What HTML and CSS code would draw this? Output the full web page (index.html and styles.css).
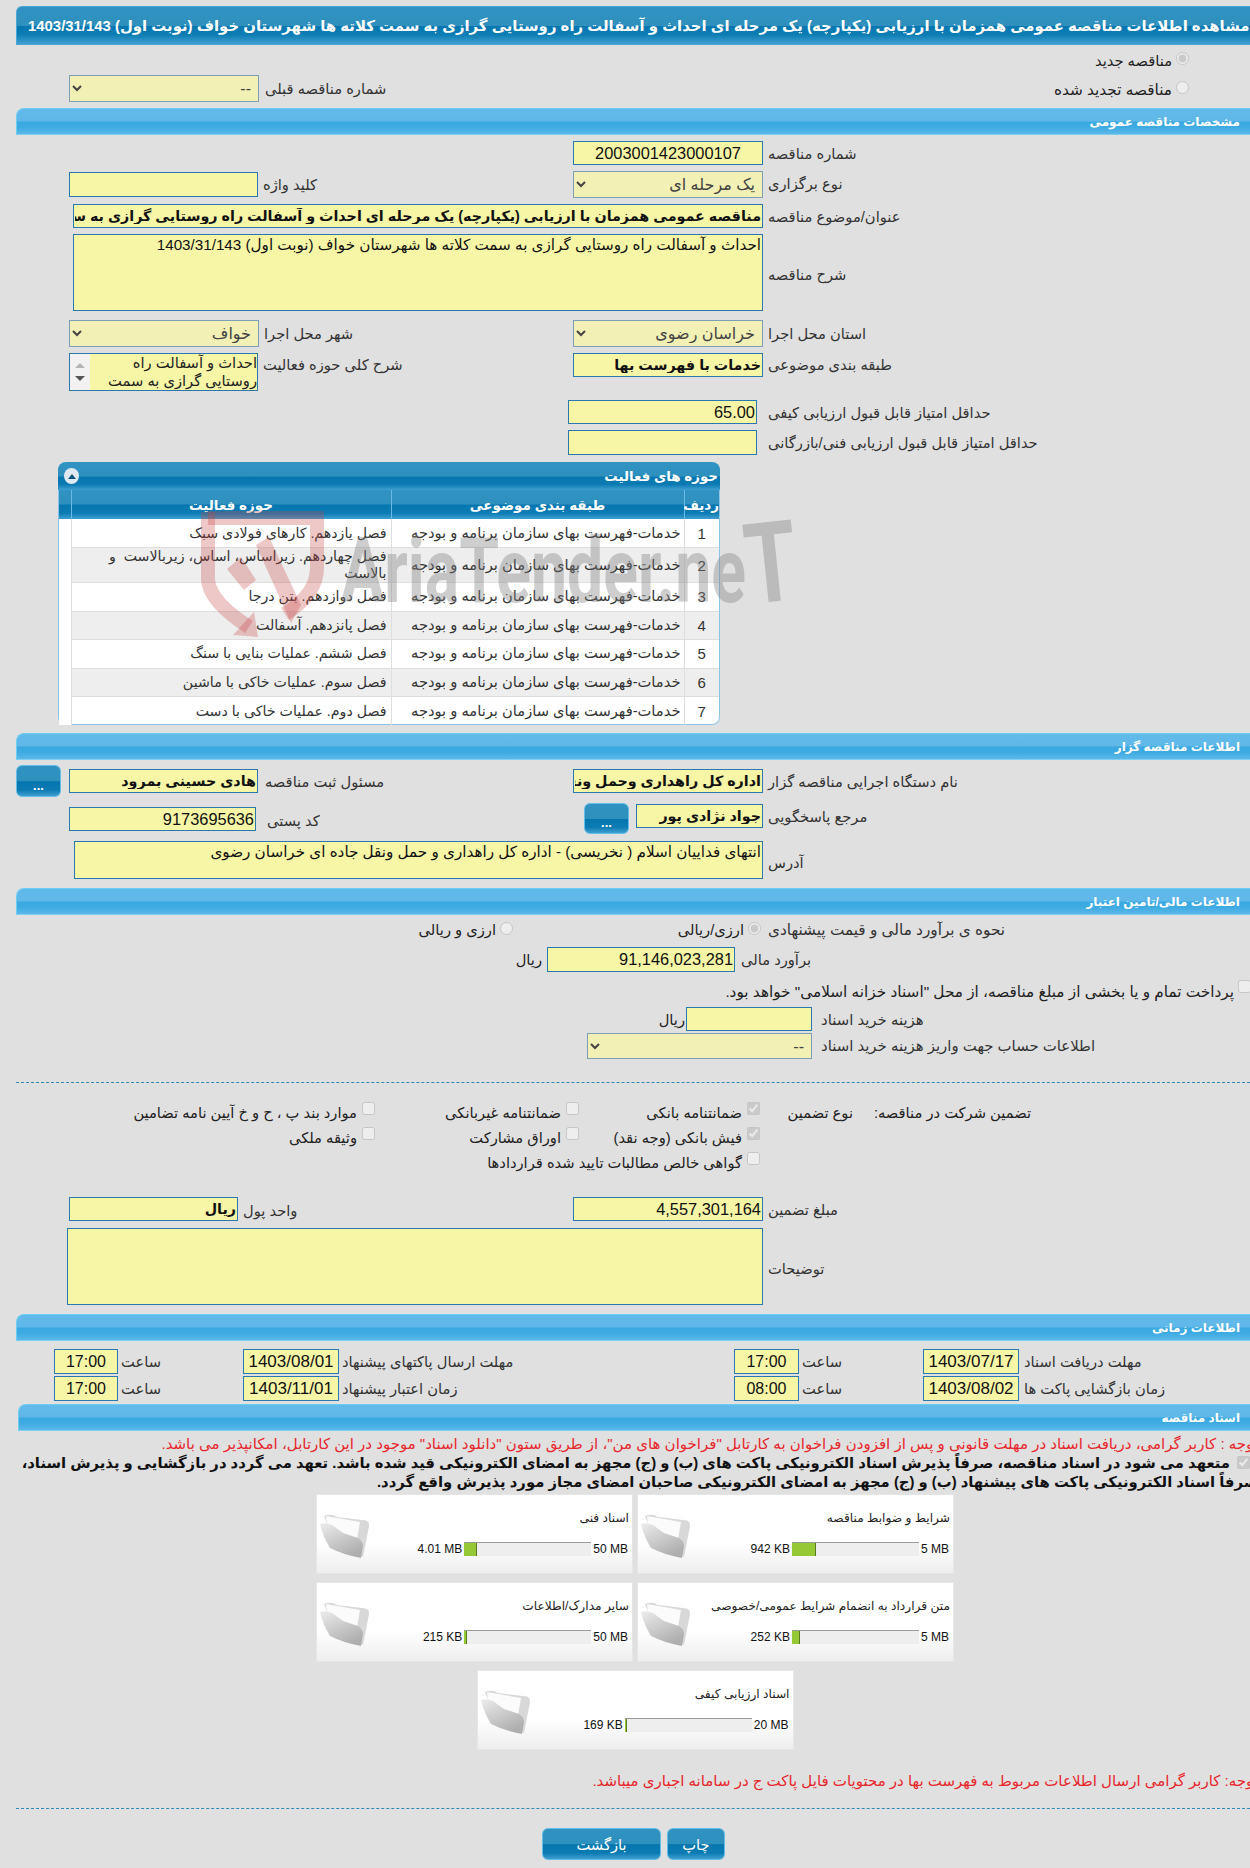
FILE: index.html
```html
<!DOCTYPE html>
<html lang="fa">
<head>
<meta charset="utf-8">
<title>مشاهده اطلاعات مناقصه</title>
<link rel="stylesheet" href="styles.css">
</head>
<body>
<svg class="defs" width="0" height="0" aria-hidden="true">
  <defs>
    <linearGradient id="fold" x1="0" y1="0" x2="0.6" y2="1"><stop offset="0" stop-color="#ececec"/><stop offset="1" stop-color="#aeaeae"/></linearGradient>
    <symbol id="folder" viewBox="0 0 52 45">
      <path d="M4 3 Q11 0 17 4 L42 7 Q50 7 49 13 L43 44 L14 28Z" fill="#d8d8d8"/>
      <path d="M6 3 L40 9 L36 32 L8 20Z" fill="#fbfbfb"/>
      <path d="M0 11 Q5 9 12 12 L23 20 L38 25 Q43 28 43 33 L41 45 Q24 42 10 35 Q3 24 0 11Z" fill="url(#fold)"/>
    </symbol>
  </defs>
</svg>
<main class="page">
  <h1 class="title"><span>مشاهده اطلاعات مناقصه عمومی همزمان با ارزیابی (یکپارچه) یک مرحله ای احداث و آسفالت راه روستایی گرازی به سمت کلاته ها شهرستان خواف (نوبت اول) 1403/31/143</span></h1>

  <div class="row radio-row-a">
    <div></div>
    <label class="opt opt-top"><input type="radio" checked disabled><span>مناقصه جدید</span></label>
  </div>
  <div class="row radio-row-b">
    <div class="col-l f"><select class="sel w190" disabled dir="rtl"><option>--</option></select><span class="lbl lbl-mid">شماره مناقصه قبلی</span></div>
    <label class="opt opt-top"><input type="radio" disabled><span>مناقصه تجدید شده</span></label>
  </div>

  <h2 class="section">مشخصات مناقصه عمومی</h2>
  <div class="row mt6">
    <div></div>
    <div class="f"><input class="inp w190 h24 num num-l" dir="ltr" value="2003001423000107" readonly><span class="lbl">شماره مناقصه</span></div>
  </div>
  <div class="row mt6">
    <div class="col-l f off1"><input class="inp w189 h25" readonly><span class="lbl">کلید واژه</span></div>
    <div class="f"><select class="sel w190" disabled dir="rtl"><option>یک مرحله ای</option></select><span class="lbl">نوع برگزاری</span></div>
  </div>
  <div class="full mt6 off-wide f">
    <input class="inp w690 h24 strong" dir="rtl" value="مناقصه عمومی همزمان با ارزیابی (یکپارچه) یک مرحله ای احداث و آسفالت راه روستایی گرازی به سمت کلاته ها شهرستان خواف (نوبت اول) 1403/31/143" readonly>
    <span class="lbl">عنوان/موضوع مناقصه</span>
  </div>
  <div class="full mt6 off-wide f">
    <textarea class="inp w690 h77" dir="rtl" readonly>احداث و آسفالت راه روستایی گرازی به سمت کلاته ها شهرستان خواف (نوبت اول) 1403/31/143</textarea>
    <span class="lbl lbl-center">شرح مناقصه</span>
  </div>
  <div class="row mt9">
    <div class="col-l f"><select class="sel w190" disabled dir="rtl"><option>خواف</option></select><span class="lbl lbl-s">شهر محل اجرا</span></div>
    <div class="f"><select class="sel w190" disabled dir="rtl"><option>خراسان رضوی</option></select><span class="lbl lbl-s">استان محل اجرا</span></div>
  </div>
  <div class="row mt6">
    <div class="col-l f">
      <div class="scrollbox">
        <div class="scrollbar"><i class="up"></i><i class="down"></i></div>
        <div class="scrolltext" dir="rtl">احداث و آسفالت راه<br>روستایی گرازی به سمت</div>
      </div>
      <span class="lbl lbl-top">شرح کلی حوزه فعالیت</span>
    </div>
    <div class="f"><input class="inp w190 h24 strong" dir="rtl" value="خدمات با فهرست بها" readonly><span class="lbl lbl-top">طبقه بندی موضوعی</span></div>
  </div>
  <div class="full mt9 off-score f"><input class="inp w189 h24 num" dir="rtl" value="65.00" readonly><span class="lbl lbl-score">حداقل امتیاز قابل قبول ارزیابی کیفی</span></div>
  <div class="full mt6 off-score f"><input class="inp w189 h25" readonly><span class="lbl lbl-score">حداقل امتیاز قابل قبول ارزیابی فنی/بازرگانی</span></div>

  <section class="panel">
    <div class="panel-head"><button class="collapse" aria-label="بستن"><i></i></button><span>حوزه های فعالیت</span></div>
    <table class="grid">
      <colgroup><col class="c0"><col class="c1"><col class="c2"><col class="c3"></colgroup>
      <thead><tr><th></th><th>حوزه فعالیت</th><th>طبقه بندی موضوعی</th><th>ردیف</th></tr></thead>
      <tbody>
        <tr><td></td><td>فصل یازدهم. کارهای فولادی سبک</td><td>خدمات-فهرست بهای سازمان برنامه و بودجه</td><td>1</td></tr>
        <tr><td></td><td>فصل چهاردهم. زیراساس، اساس، زیربالاست &nbsp;و بالاست</td><td>خدمات-فهرست بهای سازمان برنامه و بودجه</td><td>2</td></tr>
        <tr><td></td><td>فصل دوازدهم. بتن درجا</td><td>خدمات-فهرست بهای سازمان برنامه و بودجه</td><td>3</td></tr>
        <tr><td></td><td>فصل پانزدهم. آسفالت</td><td>خدمات-فهرست بهای سازمان برنامه و بودجه</td><td>4</td></tr>
        <tr><td></td><td>فصل ششم. عملیات بنایی با سنگ</td><td>خدمات-فهرست بهای سازمان برنامه و بودجه</td><td>5</td></tr>
        <tr><td></td><td>فصل سوم. عملیات خاکی با ماشین</td><td>خدمات-فهرست بهای سازمان برنامه و بودجه</td><td>6</td></tr>
        <tr><td></td><td>فصل دوم. عملیات خاکی با دست</td><td>خدمات-فهرست بهای سازمان برنامه و بودجه</td><td>7</td></tr>
      </tbody>
    </table>
    <svg class="watermark" viewBox="0 0 760 263" width="760" height="263" aria-hidden="true">
      <g fill="none" stroke="#c84646" stroke-opacity=".3" stroke-width="14">
        <path d="M149 56 H258 V106 Q258 132 226 152"/>
        <path d="M149 50 V118 Q151 140 190 165"/>
      </g>
      <g fill="#c84646" fill-opacity=".3">
        <path d="M174 173 L199 175 L195 150Z"/>
        <path d="M197 83 L210 75 L242 143 L232 161Z"/>
        <path d="M168 107 L182 95 L197 118 L185 128Z"/>
      </g>
      <text class="wm-text" x="282" y="140" textLength="405" lengthAdjust="spacingAndGlyphs">AriaTender.ne</text>
      <text class="wm-text wm-t" x="690" y="142" transform="rotate(-6 690 142)" textLength="52" lengthAdjust="spacingAndGlyphs">T</text>
    </svg>
  </section>

  <h2 class="section mt8">اطلاعات مناقصه گزار</h2>
  <div class="row mt9">
    <div class="f"><button class="btn btn-dots">...</button><input class="inp w189 h24 strong ml8" dir="rtl" value="هادی حسینی بمرود" readonly><span class="lbl lbl-far">مسئول ثبت مناقصه</span></div>
    <div class="f"><input class="inp w190 h24 strong" dir="rtl" value="اداره کل راهداری وحمل ونقل جاده ای خراسان رضوی" readonly><span class="lbl">نام دستگاه اجرایی مناقصه گزار</span></div>
  </div>
  <div class="row mt7">
    <div class="col-l f"><input class="inp w187 h24 mt3 num" dir="rtl" value="9173695636" readonly><span class="lbl lbl-post">کد پستی</span></div>
    <div class="f resp"><button class="btn btn-dots btn-resp">...</button><input class="inp w127 h24 strong" dir="rtl" value="جواد نژادی پور" readonly><span class="lbl">مرجع پاسخگویی</span></div>
  </div>
  <div class="full mt7 off-addr f">
    <textarea class="inp w689 h38" dir="rtl" readonly>انتهای فداییان اسلام ( نخریسی) - اداره کل راهداری و حمل ونقل جاده ای خراسان رضوی</textarea>
    <span class="lbl lbl-center">آدرس</span>
  </div>

  <h2 class="section mt9">اطلاعات مالی/تامین اعتبار</h2>
  <div class="mode mt7">
    <label class="opt mode-a"><input type="radio" disabled><span>ارزی و ریالی</span></label>
    <label class="opt mode-b"><input type="radio" checked disabled><span>ارزی/ریالی</span></label>
    <span class="lbl">نحوه ی برآورد مالی و قیمت پیشنهادی</span>
  </div>
  <div class="est mt11">
    <span class="unit">ریال</span>
    <input class="inp w188 h25 num" dir="rtl" value="91,146,023,281" readonly>
    <span class="lbl lbl-est">برآورد مالی</span>
  </div>
  <label class="opt treasury"><input type="checkbox" disabled><span>پرداخت تمام و یا بخشی از مبلغ مناقصه، از محل "اسناد خزانه اسلامی" خواهد بود.</span></label>
  <div class="fee mt4">
    <span class="unit unit-tight">ریال</span>
    <input class="inp w126 h24" readonly>
    <span class="lbl lbl-fee">هزینه خرید اسناد</span>
  </div>
  <div class="account mt2">
    <select class="sel w225 h26" disabled dir="rtl"><option>--</option></select>
    <span class="lbl lbl-fee">اطلاعات حساب جهت واریز هزینه خرید اسناد</span>
  </div>
  <hr class="dash dash-a">

  <div class="guarantee">
    <label class="opt"><input type="checkbox" disabled><span>موارد بند پ ، ح و خ آیین نامه تضامین</span></label>
    <label class="opt"><input type="checkbox" disabled><span>ضمانتنامه غیربانکی</span></label>
    <label class="opt"><input type="checkbox" checked disabled><span>ضمانتنامه بانکی</span></label>
    <span class="g-type">نوع تضمین</span>
    <span class="g-head">تضمین شرکت در مناقصه:</span>
    <label class="opt"><input type="checkbox" disabled><span>وثیقه ملکی</span></label>
    <label class="opt"><input type="checkbox" disabled><span>اوراق مشارکت</span></label>
    <label class="opt"><input type="checkbox" checked disabled><span>فیش بانکی (وجه نقد)</span></label>
    <span></span><span></span>
    <span></span>
    <label class="opt g-wide"><input type="checkbox" disabled><span>گواهی خالص مطالبات تایید شده قراردادها</span></label>
  </div>

  <div class="row mt22">
    <div class="col-l f"><input class="inp w169 h24 strong" dir="rtl" value="ریال" readonly><span class="lbl lbl-s">واحد پول</span></div>
    <div class="f"><input class="inp w190 h24 num" dir="rtl" value="4,557,301,164" readonly><span class="lbl">مبلغ تضمین</span></div>
  </div>
  <div class="full mt6 off-note f">
    <textarea class="inp w696 h77" dir="rtl" readonly></textarea>
    <span class="lbl lbl-center">توضیحات</span>
  </div>

  <h2 class="section mt9">اطلاعات زمانی</h2>
  <div class="times mt8">
    <div class="f"><input class="inp w64 h25 num num-c" value="17:00" readonly><span class="lbl lbl-t">ساعت</span></div>
    <div class="f"><input class="inp w96 h25 num num-c" value="1403/08/01" readonly><span class="lbl lbl-t">مهلت ارسال پاکتهای پیشنهاد</span></div>
    <div class="f"><input class="inp w65 h25 num num-c" value="17:00" readonly><span class="lbl lbl-t">ساعت</span></div>
    <div class="f"><input class="inp w96 h25 num num-c" value="1403/07/17" readonly><span class="lbl lbl-d">مهلت دریافت اسناد</span></div>
  </div>
  <div class="times mt2">
    <div class="f"><input class="inp w64 h25 num num-c" value="17:00" readonly><span class="lbl lbl-t">ساعت</span></div>
    <div class="f"><input class="inp w96 h25 num num-c" value="1403/11/01" readonly><span class="lbl lbl-t">زمان اعتبار پیشنهاد</span></div>
    <div class="f"><input class="inp w65 h25 num num-c" value="08:00" readonly><span class="lbl lbl-t">ساعت</span></div>
    <div class="f"><input class="inp w96 h25 num num-c" value="1403/08/02" readonly><span class="lbl lbl-d">زمان بازگشایی پاکت ها</span></div>
  </div>

  <h2 class="section section-docs">اسناد مناقصه</h2>
  <p class="warn warn-a">توجه : کاربر گرامی، دریافت اسناد در مهلت قانونی و پس از افزودن فراخوان به کارتابل "فراخوان های من"، از طریق ستون "دانلود اسناد" موجود در این کارتابل، امکانپذیر می باشد.</p>
  <p class="pledge"><input type="checkbox" checked disabled>متعهد می شود در اسناد مناقصه، صرفاً پذیرش اسناد الکترونیکی پاکت های (ب) و (ج) مجهز به امضای الکترونیکی قید شده باشد. تعهد می گردد در بازگشایی و پذیرش اسناد،<br>صرفاً اسناد الکترونیکی پاکت های پیشنهاد (ب) و (ج) مجهز به امضای الکترونیکی صاحبان امضای مجاز مورد پذیرش واقع گردد.</p>

  <div class="cards">
    <article class="card">
      <svg class="folder"><use href="#folder"/></svg>
      <div class="card-body"><div class="card-title">شرایط و ضوابط مناقصه</div>
        <div class="usage"><span class="used">942 KB</span><span class="bar"><i style="width:19%"></i></span><span class="max">5 MB</span></div></div>
    </article>
    <article class="card">
      <svg class="folder"><use href="#folder"/></svg>
      <div class="card-body"><div class="card-title">اسناد فنی</div>
        <div class="usage"><span class="used">4.01 MB</span><span class="bar"><i style="width:10%"></i></span><span class="max">50 MB</span></div></div>
    </article>
    <article class="card">
      <svg class="folder"><use href="#folder"/></svg>
      <div class="card-body"><div class="card-title">متن قرارداد به انضمام شرایط عمومی/خصوصی</div>
        <div class="usage"><span class="used">252 KB</span><span class="bar"><i style="width:6%"></i></span><span class="max">5 MB</span></div></div>
    </article>
    <article class="card">
      <svg class="folder"><use href="#folder"/></svg>
      <div class="card-body"><div class="card-title">سایر مدارک/اطلاعات</div>
        <div class="usage"><span class="used">215 KB</span><span class="bar"><i style="width:2%"></i></span><span class="max">50 MB</span></div></div>
    </article>
    <article class="card">
      <svg class="folder"><use href="#folder"/></svg>
      <div class="card-body"><div class="card-title">اسناد ارزیابی کیفی</div>
        <div class="usage"><span class="used">169 KB</span><span class="bar"><i style="width:2%"></i></span><span class="max">20 MB</span></div></div>
    </article>
  </div>

  <p class="warn warn-b">توجه: کاربر گرامی ارسال اطلاعات مربوط به فهرست بها در محتویات فایل پاکت ج در سامانه اجباری میباشد.</p>
  <hr class="dash dash-b">
  <div class="actions">
    <button class="btn btn-back">بازگشت</button>
    <button class="btn btn-print">چاپ</button>
  </div>
</main>
</body>
</html>
```

FILE: styles.css
```css
* { box-sizing: border-box; }
html, body { margin: 0; padding: 0; overflow: hidden; }
html { background: #e0e0e0; }
body {
  width: 1250px;
  height: 1868px;
  font-family: "Liberation Sans", "DejaVu Sans", sans-serif;
  font-size: 14.7px;
  color: #222;
}
.defs { position: absolute; }
.page { padding: 6px 0 0 16px; width: 1250px; }

/* headers */
.title {
  margin: 0;
  height: 39px;
  display: flex;
  align-items: center;
  padding-left: 11px;
  overflow: hidden;
  white-space: nowrap;
  color: #fff;
  font-size: 14.9px;
  font-weight: bold;
  border: 1px solid #4aa6d8;
  border-right: 0;
  border-radius: 6px 0 0 0;
  background: linear-gradient(#2f93c1 0, #2f90bd 50%, #0676b0 52%, #0d7db4 75%, #3f9fd0 100%);
}
.title span { direction: rtl; flex: none; }
.section {
  margin: 0;
  height: 27px;
  line-height: 26px;
  padding-right: 10px;
  text-align: right;
  direction: rtl;
  color: #fff;
  font-size: 12px;
  font-weight: bold;
  border: 1px solid #6ccdf2;
  border-right: 0;
  border-bottom-color: #7dd0f2;
  border-radius: 8px 0 0 0;
  background: linear-gradient(#62baea 0, #60b8e8 48%, #3aa8e1 52%, #3fabe3 75%, #5cb8e8 100%);
}
.section.mt8 { margin-top: 8px; }
.section.mt9 { margin-top: 9px; }
.section-docs { margin: 3px 0 0 2px; }

/* rows */
.row { display: grid; grid-template-columns: 557px 677px; align-items: start; }
.radio-row-a { height: 28px; }
.radio-row-b { height: 35px; }
.radio-row-b .col-l { margin-top: 2px; }
.f { display: flex; align-items: flex-start; }
.col-l { padding-left: 53px; }
.off1 { padding-top: 1px; }
.off-wide { padding-left: 57px; }
.off-score { padding-left: 552px; }
.off-addr { padding-left: 58px; }
.off-note { padding-left: 51px; }
.ml8 { margin-left: 8px; }

.mt2 { margin-top: 2px; }
.mt3 { margin-top: 3px; }
.mt4 { margin-top: 4px; }
.mt6 { margin-top: 6px; }
.mt7 { margin-top: 7px; }
.mt8 { margin-top: 8px; }
.mt9 { margin-top: 9px; }
.mt11 { margin-top: 11px; }
.mt22 { margin-top: 22px; }

/* fields */
.inp {
  display: block;
  padding: 0 1px;
  border: 1px solid #2a78ae;
  border-radius: 0;
  background: #f7f6a6;
  color: #111;
  font-family: "Liberation Sans", "DejaVu Sans", sans-serif;
  font-size: 15.2px;
  outline: none;
  resize: none;
  overflow: hidden;
}
textarea.inp { line-height: 17px; padding-top: 1px; }
.inp.strong { font-size: 14.3px; font-weight: bold; }
.inp.num { font-size: 16.4px; }
.inp.num-l { text-align: center; }
.inp.num-c { text-align: center; font-size: 16px; padding: 0; }
.inp.num-c.w96 { font-size: 17px; }
.sel {
  display: block;
  height: 27px;
  padding: 0 3px;
  border: 1px solid #7d9fb5;
  border-radius: 0;
  background-color: #f2f0b4;
  color: #444;
  opacity: 1;
  font-family: "Liberation Sans", "DejaVu Sans", sans-serif;
  font-size: 16px;
}
.w64 { width: 64px; } .w65 { width: 65px; } .w96 { width: 96px; }
.w126 { width: 126px; } .w127 { width: 127px; } .w169 { width: 169px; }
.w187 { width: 187px; } .w188 { width: 188px; } .w189 { width: 189px; }
.w190 { width: 190px; } .w225 { width: 225px; } .w689 { width: 689px; }
.w690 { width: 690px; } .w696 { width: 696px; }
.h24 { height: 24px; } .h25 { height: 25px; } .h26 { height: 26px; }
.h38 { height: 38px; } .h77 { height: 77px; }

.lbl { direction: rtl; margin-left: 5px; height: 24px; line-height: 26px; color: #333; white-space: nowrap; }
.lbl-s { margin-top: 1px; }
.lbl-mid { margin-top: 1px; margin-left: 6px; }
.lbl-top { margin-top: -1px; }
.lbl-center { align-self: center; margin-top: 3px; }
.lbl-far { margin-left: 7px; }
.lbl-score { margin-left: 11px; }
.lbl-post { margin-top: 4px; margin-left: 11px; }
.lbl-t { margin-left: 3px; }
.lbl-d { margin-left: 5px; }
.lbl-est { margin-left: 6px; }
.lbl-fee { margin-left: 9px; font-size: 14.9px; }

/* times */
.times { display: grid; grid-template-columns: 189px 491px 189px 1fr; padding-left: 38px; }

/* scroll list */
.scrollbox { display: flex; width: 189px; height: 38px; border: 1px solid #2a78ae; background: #f7f6a6; overflow: hidden; }
.scrollbar { flex: none; width: 20px; background: #f2f2f2; display: flex; flex-direction: column; align-items: center; justify-content: center; gap: 8px; }
.scrollbar i { width: 0; height: 0; border-left: 5px solid transparent; border-right: 5px solid transparent; }
.up { border-bottom: 5px solid #b5b5b5; }
.down { border-top: 5px solid #555; }
.scrolltext { flex: 1; line-height: 18px; white-space: nowrap; text-align: right; color: #222; overflow: hidden; }

/* options */
.opt { display: flex; justify-content: flex-end; align-items: flex-start; gap: 4px; direction: ltr; }
.opt span { direction: rtl; white-space: nowrap; }
.opt input { margin: 0; order: 2; width: 13px; height: 13px; flex: none; }
.opt-top { padding-right: 61px; line-height: 24px; }
.opt-top span { margin-top: 4px; }
.opt-top input { margin-top: 7px; }
.radio-row-b .opt-top span { margin-top: 5px; font-size: 15.3px; }
.radio-row-b .opt-top input { margin-top: 8px; }

.mode { display: flex; align-items: flex-start; height: 14px; }
.mode .lbl { margin-left: 7px; margin-top: -5px; font-size: 15.3px; }
.mode-a { width: 497px; }
.mode-b { width: 248px; }
.mode .opt span { line-height: 20px; margin-top: -2px; }

.est { display: flex; align-items: flex-start; }
.unit { width: 531px; height: 24px; text-align: right; padding-right: 5px; line-height: 26px; }
.treasury { margin-top: 8px; margin-right: -1px; width: 1235px; line-height: 24px; height: 23px; font-size: 15.3px; }
.treasury input { margin-top: 0; }
.fee, .account { display: flex; align-items: flex-start; }
.unit-tight { width: 670px; padding-right: 1px; }
.account { padding-left: 571px; }
.dash { border: 0; border-top: 1px dashed #2e88b8; margin: 0; }
.dash-a { margin-top: 23px; }
.dash-b { margin-top: 18px; }

/* guarantee */
.guarantee {
  margin-top: 17px;
  display: grid;
  grid-template-columns: 359px 204px 181px 95px 176px;
  grid-auto-rows: 25px;
}
.guarantee .opt span { line-height: 24px; margin-top: 1px; }
.guarantee input { margin-top: 2px; }
.guarantee .opt { gap: 5px; }
.g-type, .g-head { direction: rtl; text-align: right; line-height: 24px; margin-top: 1px; }
.g-type { padding-right: 2px; }
.g-wide { grid-column: 2 / 4; }

/* table panel */
.panel {
  position: relative;
  margin: 7px 0 0 42px;
  width: 662px;
  height: 263px;
  border: 1px solid #8cc4e8;
  border-top: 0;
  border-radius: 8px;
  background: #fff;
}
.panel-head {
  height: 28px;
  display: flex;
  justify-content: space-between;
  align-items: center;
  padding: 0 2px 0 6px;
  direction: ltr;
  color: #fff;
  font-size: 13.4px;
  font-weight: bold;
  border-radius: 8px 8px 0 0;
  margin: 0 -1px;
  background: linear-gradient(#3093c2 0, #2e90bd 50%, #0676b0 54%, #0c7bb3 80%, #3f9fd0 100%);
}
.panel-head span { direction: rtl; }
.collapse { width: 15px; height: 16px; padding: 0; border: 0; border-radius: 50%; background: #dfe9f2; display: flex; align-items: center; justify-content: center; }
.collapse i { width: 0; height: 0; border-left: 4px solid transparent; border-right: 4px solid transparent; border-bottom: 5px solid #07547f; }
.grid { width: 660px; border-collapse: collapse; table-layout: fixed; }
.c0 { width: 12px; } .c1 { width: 320px; } .c2 { width: 293px; } .c3 { width: 35px; }
.grid th {
  height: 29px;
  padding: 0;
  color: #fff;
  font-size: 13.5px;
  font-weight: bold;
  direction: rtl;
  border-left: 1px solid #6ab8e4;
  background: linear-gradient(#3093c2 0, #2e90bd 48%, #0676b0 52%, #0c7bb3 80%, #3f9fd0 100%);
}
.grid th:first-child { border-left: 0; }
.grid td {
  height: 28.5px;
  padding: 0 3px;
  direction: rtl;
  text-align: right;
  line-height: 17px;
  color: #333;
  border-left: 1px solid #dedede;
  border-bottom: 1px solid #dedede;
}
.grid td:first-child { border: 0; background: #fff; }
.grid td:nth-child(2) { padding-right: 4px; font-size: 14.2px; }
.grid td:last-child { text-align: center; font-size: 15px; }
.grid tbody tr:last-child td { border-bottom: 0; }
.grid tbody tr:nth-child(even) { background: #eee; }
.watermark { position: absolute; left: 0; top: 0; pointer-events: none; overflow: visible; }
.wm-text { font-family: "Roboto", "Liberation Sans", sans-serif; font-weight: 700; font-size: 90px; fill: #7f7f7f; fill-opacity: .38; }
.wm-t { font-size: 112px; }

/* buttons */
.btn {
  padding: 0;
  border: 1px solid #62bde8;
  border-radius: 6px;
  color: #fff;
  font-family: "Liberation Sans", "DejaVu Sans", sans-serif;
  font-size: 14.7px;
  background: linear-gradient(#2f92c0 0, #2e90bd 50%, #0676b0 52%, #0c7bb3 80%, #3f9fd0 100%);
}
.btn-dots { flex: none; width: 45px; height: 32px; margin-top: -4px; font-size: 13px; font-weight: bold; padding-top: 8px; line-height: 1; }
.resp { margin-left: 11px; }
.btn-resp { margin-top: -1px; height: 31px; margin-right: 7px; }
.actions { margin: 19px 0 0 526px; display: flex; gap: 6px; height: 32px; }
.btn-back { width: 119px; }
.btn-print { width: 58px; }

/* docs */
.warn { margin: 0; direction: rtl; white-space: nowrap; color: #e8262b; line-height: 18px; text-align: right; font-size: 15px; }
.warn-a { margin-top: 4px; margin-right: -8px; }
.warn-b { margin-top: 22px; margin-right: -8px; }
.pledge { margin: 1px -8px 0 0; direction: rtl; text-align: right; white-space: nowrap; font-weight: bold; font-size: 14.8px; line-height: 19px; color: #111; }
.pledge input { margin: 0 8px 0 7px; width: 13px; height: 13px; vertical-align: -1px; }
.cards {
  margin: 2px 0 0 300px;
  width: 638px;
  direction: rtl;
  display: flex;
  flex-wrap: wrap;
  justify-content: center;
  gap: 8px 4px;
}
.card {
  width: 317px;
  height: 80px;
  direction: ltr;
  display: flex;
  padding: 18px 0 0 3px;
  border: 1px solid #e6e6e6;
  background: linear-gradient(#fff 0, #fff 60%, #eee 100%);
}
.folder { width: 52px; height: 45px; flex: none; }
.card-body { flex: 1; min-width: 0; }
.card-title { direction: rtl; text-align: right; padding-right: 3px; font-size: 12.2px; line-height: 16px; margin-top: -3px; height: 32px; white-space: nowrap; color: #222; }
.usage { display: flex; justify-content: flex-end; align-items: center; height: 14px; font-size: 12px; color: #111; white-space: nowrap; }
.bar { display: block; flex: none; width: 127px; height: 14px; margin: 0 2px; border-top: 1px solid #9a9a9a; background: #eee; }
.bar i { display: block; height: 13px; background: #94c834; border-right: 1px solid #5a7a22; }
.max { flex: none; margin-right: 4px; }
```
